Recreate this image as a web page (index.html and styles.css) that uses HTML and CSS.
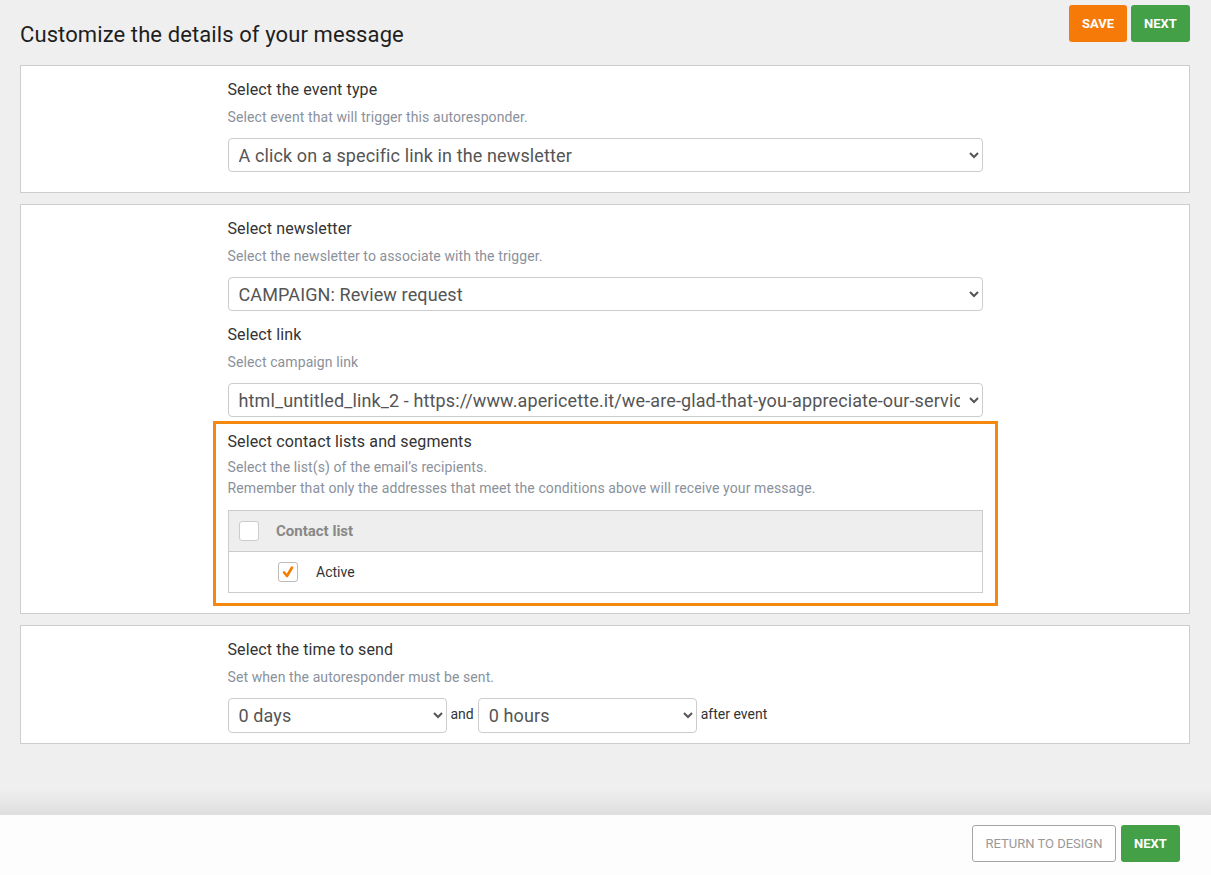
FILE: index.html
```html
<!DOCTYPE html>
<html lang="en">
<head>
  <meta charset="UTF-8" />
  <title>Autoresponder details</title>
  <link rel="stylesheet" href="styles.css">
</head>
<body>

  <header class="top-bar">
    <h1 class="page-title">Customize the details of your message</h1>
    <div class="top-actions">
      <button class="btn btn-save">SAVE</button>
      <button class="btn btn-next">NEXT</button>
    </div>
  </header>

  <main class="content">

    <!-- Event type -->
    <section class="card">
      <div class="card-body">
        <label class="field-label">Select the event type</label>
        <p class="field-help">Select event that will trigger this autoresponder.</p>
        <select class="field-select">
          <option>A click on a specific link in the newsletter</option>
        </select>
      </div>
    </section>

    <!-- Newsletter / link / lists -->
    <section class="card card-tight">
      <div class="card-body">
        <label class="field-label">Select newsletter</label>
        <p class="field-help">Select the newsletter to associate with the trigger.</p>
        <select class="field-select">
          <option>CAMPAIGN: Review request</option>
        </select>

        <label class="field-label spaced">Select link</label>
        <p class="field-help">Select campaign link</p>
        <select class="field-select">
          <option>html_untitled_link_2 - https://www.apericette.it/we-are-glad-that-you-appreciate-our-service</option>
        </select>

        <div class="highlight-box">
          <label class="field-label">Select contact lists and segments</label>
          <p class="field-help multi">Select the list(s) of the email’s recipients.<br>Remember that only the addresses that meet the conditions above will receive your message.</p>

          <table class="list-table">
            <thead>
              <tr>
                <th class="col-check"><span class="check-box"></span></th>
                <th>Contact list</th>
              </tr>
            </thead>
            <tbody>
              <tr>
                <td class="col-check"></td>
                <td>
                  <div class="list-item">
                    <span class="check-box checked">
                      <svg width="14" height="14" viewBox="0 0 14 14"><path d="M3 7.5 L6 11 L11 2.5" fill="none" stroke="#f57c00" stroke-width="2.6" stroke-linecap="round" stroke-linejoin="round"/></svg>
                    </span>
                    <span>Active</span>
                  </div>
                </td>
              </tr>
            </tbody>
          </table>
        </div>
      </div>
    </section>

    <!-- Time to send -->
    <section class="card card-short">
      <div class="card-body">
        <label class="field-label">Select the time to send</label>
        <p class="field-help">Set when the autoresponder must be sent.</p>
        <div class="time-row">
          <select class="field-select small">
            <option>0 days</option>
          </select>
          <span class="time-word">and</span>
          <select class="field-select small">
            <option>0 hours</option>
          </select>
          <span class="time-word">after event</span>
        </div>
      </div>
    </section>

  </main>

  <footer class="bottom-bar">
    <button class="btn btn-outline">RETURN TO DESIGN</button>
    <button class="btn btn-next">NEXT</button>
  </footer>

</body>
</html>
```

FILE: styles.css
```css
* {
  box-sizing: border-box;
}
body {
  margin: 0;
  font-family: Roboto, "Liberation Sans", sans-serif;
  background: #efefef;
  color: #333;
  min-height: 100vh;
  display: flex;
  flex-direction: column;
}

/* top */
.top-bar {
  display: flex;
  justify-content: space-between;
  align-items: flex-start;
  height: 65px;
  padding: 5px 21px 0 20px;
}
.page-title {
  margin: 17px 0 0;
  font-size: 22px;
  line-height: 26px;
  font-weight: 400;
  letter-spacing: 0.1px;
  color: #1e1e1e;
}
.top-actions {
  display: flex;
  gap: 4px;
}

/* buttons */
.btn {
  font-family: inherit;
  font-size: 13px;
  font-weight: 700;
  height: 37px;
  border: none;
  border-radius: 3px;
  color: #fff;
  cursor: pointer;
  padding: 0;
}
.btn-save {
  background: #f57a08;
  width: 58px;
}
.btn-next {
  background: #43a047;
  width: 59px;
}
.btn-outline {
  background: #fff;
  color: #999;
  border: 1px solid #a5a5a5;
  font-weight: 400;
  width: 144px;
}

/* cards */
.content {
  padding: 0 21px 0 20px;
  display: flex;
  flex-direction: column;
  gap: 11px;
}
.card {
  background: #fff;
  border: 1px solid #cdcdcd;
  padding: 13px 0 20px;
}
.card-tight {
  padding-bottom: 7px;
}
.card-short {
  padding-bottom: 10px;
}
.card-body {
  width: 755px;
  margin: 0 auto;
}

.field-label {
  display: block;
  font-size: 16px;
  line-height: 21px;
  letter-spacing: 0.12px;
  color: #333;
}
.field-label.spaced {
  margin-top: 13px;
}
.field-help {
  margin: 7px 0 0;
  font-size: 14px;
  line-height: 21px;
  letter-spacing: 0.1px;
  color: #8a919b;
}
.field-help.multi {
  margin-top: 5px;
}
.field-select {
  display: block;
  width: 100%;
  height: 34px;
  margin-top: 10px;
  padding: 0 6px;
  font-family: inherit;
  font-size: 18px;
  letter-spacing: 0.12px;
  color: #555;
  background: #fff;
  border: 1px solid #ccc;
  border-radius: 4px;
}

/* highlighted lists block */
.highlight-box {
  margin: 4px -15px 0;
  padding: 7px 12px 10px;
  border: 3px solid #f5880f;
}
.list-table {
  width: 100%;
  margin-top: 11px;
  border-collapse: collapse;
  border: 1px solid #ccc;
  font-size: 14px;
}
.list-table th {
  background: #eee;
  height: 41px;
  text-align: left;
  color: #888;
  font-size: 15px;
  font-weight: 700;
  padding: 0;
  border-bottom: 1px solid #ccc;
}
.list-table td {
  height: 41px;
  padding: 0;
  color: #333;
}
.list-table .col-check {
  width: 48px;
  padding-left: 10px;
}
.check-box {
  display: flex;
  align-items: center;
  justify-content: center;
  width: 20px;
  height: 20px;
  background: #fff;
  border: 1px solid #ccc;
  border-radius: 3px;
}
.check-box.checked {
  border-color: #bbb;
}
.list-item {
  display: flex;
  align-items: center;
  gap: 18px;
  padding-left: 2px;
}

/* time row */
.time-row {
  display: flex;
  align-items: center;
  gap: 4px;
  margin-top: 10px;
}
.time-row .field-select.small {
  width: 219px;
  height: 35px;
  margin-top: 0;
}
.time-word {
  font-size: 14px;
  color: #333;
  margin-top: -3px;
}

/* bottom */
.bottom-bar {
  margin-top: auto;
  position: relative;
  height: 60px;
  background: #fdfdfd;
  display: flex;
  justify-content: flex-end;
  align-items: flex-start;
  gap: 5px;
  padding: 10px 31px 0 0;
}
.bottom-bar::before {
  content: "";
  position: absolute;
  left: 0;
  right: 0;
  top: -26px;
  height: 26px;
  background: linear-gradient(rgba(0,0,0,0), rgba(0,0,0,0.07));
}
```
